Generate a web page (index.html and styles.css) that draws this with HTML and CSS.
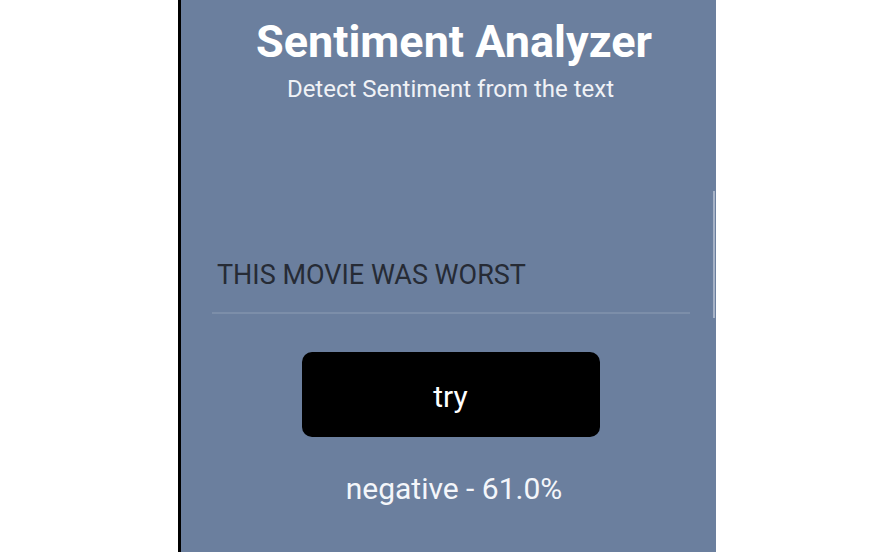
FILE: index.html
```html
<!DOCTYPE html>
<html>
<head>
<meta charset="utf-8">
<link rel="stylesheet" href="styles.css">
</head>
<body>
<div class="stage">
  <div class="phone">
    <header class="head">
      <h1 class="title">Sentiment Analyzer</h1>
      <p class="subtitle">Detect Sentiment from the text</p>
    </header>
    <div class="field">
      <div class="field-text">THIS MOVIE WAS WORST</div>
    </div>
    <div class="actions">
      <button class="try-btn">try</button>
    </div>
    <div class="result">negative - 61.0%</div>
    <div class="scrollbar"></div>
  </div>
</div>
</body>
</html>
```
FILE: styles.css
```css
html, body {
  margin: 0;
  padding: 0;
  background: #ffffff;
  font-family: Roboto, "Noto Sans", sans-serif;
}
.stage {
  width: 895px;
  height: 552px;
  display: flex;
  padding-left: 178px;
  box-sizing: border-box;
}
.phone {
  position: relative;
  width: 538px;
  height: 552px;
  box-sizing: border-box;
  background: #6b7f9e;
  border-left: 3px solid #000;
  display: flex;
  flex-direction: column;
  align-items: center;
}
.head {
  display: flex;
  flex-direction: column;
  align-items: center;
  padding-top: 16px;
}
.title {
  margin: 0;
  padding-left: 11px;
  font-size: 45px;
  font-weight: 700;
  color: #ffffff;
  line-height: 52px;
}
.subtitle {
  margin: 7px 0 0;
  padding-left: 4px;
  font-size: 24px;
  color: #f0f2f6;
  line-height: 28px;
}
.field {
  align-self: stretch;
  margin: 156px 26px 0 31px;
  border-bottom: 2px solid #7c8ea9;
  padding: 0 0 21px 5px;
}
.field-text {
  font-size: 27px;
  color: #262b35;
  line-height: 32px;
}
.actions {
  margin-top: 38px;
  display: flex;
  justify-content: center;
  padding-left: 4px;
}
.try-btn {
  width: 298px;
  height: 85px;
  background: #000;
  border: none;
  border-radius: 10px;
  color: #ffffff;
  font-family: Roboto, sans-serif;
  font-size: 30px;
  padding: 4px 0 0;
}
.result {
  margin-top: 34px;
  font-size: 30px;
  color: #f4f6fa;
  line-height: 35px;
  padding-left: 11px;
}
.scrollbar {
  position: absolute;
  right: 1px;
  top: 191px;
  width: 2px;
  height: 127px;
  background: #a7b3c7;
}
```
